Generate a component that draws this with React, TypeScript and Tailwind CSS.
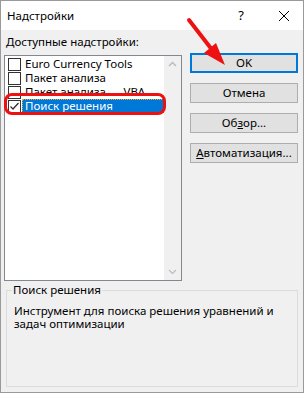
import React from "react";

const items = [
  { label: "Euro Currency Tools", checked: false },
  { label: "Пакет анализа", checked: false },
  { label: "Пакет анализа — VBA", checked: false },
  { label: "Поиск решения", checked: true, selected: true },
];

function Btn({ children, primary }: { children: React.ReactNode; primary?: boolean }) {
  return (
    <div
      className={
        "w-[108px] h-[20px] bg-[#e1e1e1] flex items-center justify-center text-[11.5px] text-black " +
        (primary ? "border-2 border-[#0078d7]" : "border border-[#adadad]")
      }
    >
      {children}
    </div>
  );
}

export default function App() {
  return (
    <div
      className="relative w-[304px] h-[393px] bg-[#f0f0f0] border border-[#9a9a9a] overflow-hidden text-black"
      style={{ fontFamily: '"Noto Sans", "Open Sans", sans-serif' }}
    >
      {/* title bar */}
      <div className="h-[29px] bg-white flex items-center pl-[6px] text-[11.5px]">
        <span className="flex-1">Надстройки</span>
        <span className="w-[20px] text-center text-[13px] mr-[27px]">?</span>
        <svg width="12" height="12" viewBox="0 0 12 12" className="mr-[13px]">
          <path d="M1 1 L11 11 M11 1 L1 11" stroke="#000" strokeWidth="1" />
        </svg>
      </div>

      <div className="flex pl-[3px] pt-[2px]">
        {/* left column */}
        <div className="flex flex-col">
          <div className="h-[20px] leading-[20px] text-[11.5px] pl-[2px]">
            <span className="underline">Д</span>оступные надстройки:
          </div>
          <div className="mt-[3px] w-[178px] h-[226px] border border-[#828790] bg-white flex">
            <div className="flex-1 pt-[1px] flex flex-col">
              {items.map((it) => (
                <div key={it.label} className="h-[14px] flex items-center">
                  <div className="ml-[3px] w-[13px] h-[13px] border border-[#333] bg-white flex items-center justify-center">
                    {it.checked && (
                      <svg width="11" height="11" viewBox="0 0 11 11">
                        <path d="M1.5 5.5 L4 8 L9.5 2" stroke="#333" strokeWidth="1.3" fill="none" />
                      </svg>
                    )}
                  </div>
                  {it.selected ? (
                    <div className="ml-[1px] flex-1 h-[14px] bg-[#0078d7] text-white text-[11.5px] leading-[12px] pl-[2px] flex items-center border border-dotted border-[#f5a623]">
                      {it.label}
                    </div>
                  ) : (
                    <div className="ml-[4px] text-[11.5px] leading-[14px]">{it.label}</div>
                  )}
                </div>
              ))}
            </div>
            <div className="w-[17px] bg-[#f0f0f0] flex flex-col justify-between items-center py-[5px]">
              <svg width="9" height="6" viewBox="0 0 9 6">
                <path d="M1 5 L4.5 1.5 L8 5" stroke="#bcbcbc" strokeWidth="1.5" fill="none" />
              </svg>
              <svg width="9" height="6" viewBox="0 0 9 6">
                <path d="M1 1 L4.5 4.5 L8 1" stroke="#bcbcbc" strokeWidth="1.2" fill="none" />
              </svg>
            </div>
          </div>
        </div>

        {/* right column */}
        <div className="ml-[8px] pt-[21px] flex flex-col gap-[10px]">
          <Btn primary>OK</Btn>
          <Btn>Отмена</Btn>
          <Btn>
            <span>
              Об<span className="underline">з</span>ор...
            </span>
          </Btn>
          <Btn>
            <span>
              <span className="underline">А</span>втоматизация...
            </span>
          </Btn>
        </div>
      </div>

      {/* group box */}
      <fieldset className="mx-[5px] mt-[2px] h-[104px] border border-[#dcdcdc] pl-[5px] pr-[5px]">
        <legend className="text-[11.5px] leading-[14px] px-[1px]">Поиск решения</legend>
        <div className="text-[11.5px] leading-[13px] pl-[2px] pt-[7px]">
          Инструмент для поиска решения уравнений и
          <br />
          задач оптимизации
        </div>
      </fieldset>

      {/* red annotation outline */}
      <div className="absolute left-[3px] top-[92px] w-[162px] h-[22px] border-[3px] border-[#ee1111] rounded-[8px] pointer-events-none" />

      {/* red arrow */}
      <svg className="absolute left-0 top-0 pointer-events-none" width="304" height="393">
        <path d="M188 19 L212 50" stroke="#ee1111" strokeWidth="4" strokeLinecap="round" />
        <path d="M224 64 L203 52 L215 42 Z" fill="#ee1111" />
      </svg>
    </div>
  );
}
